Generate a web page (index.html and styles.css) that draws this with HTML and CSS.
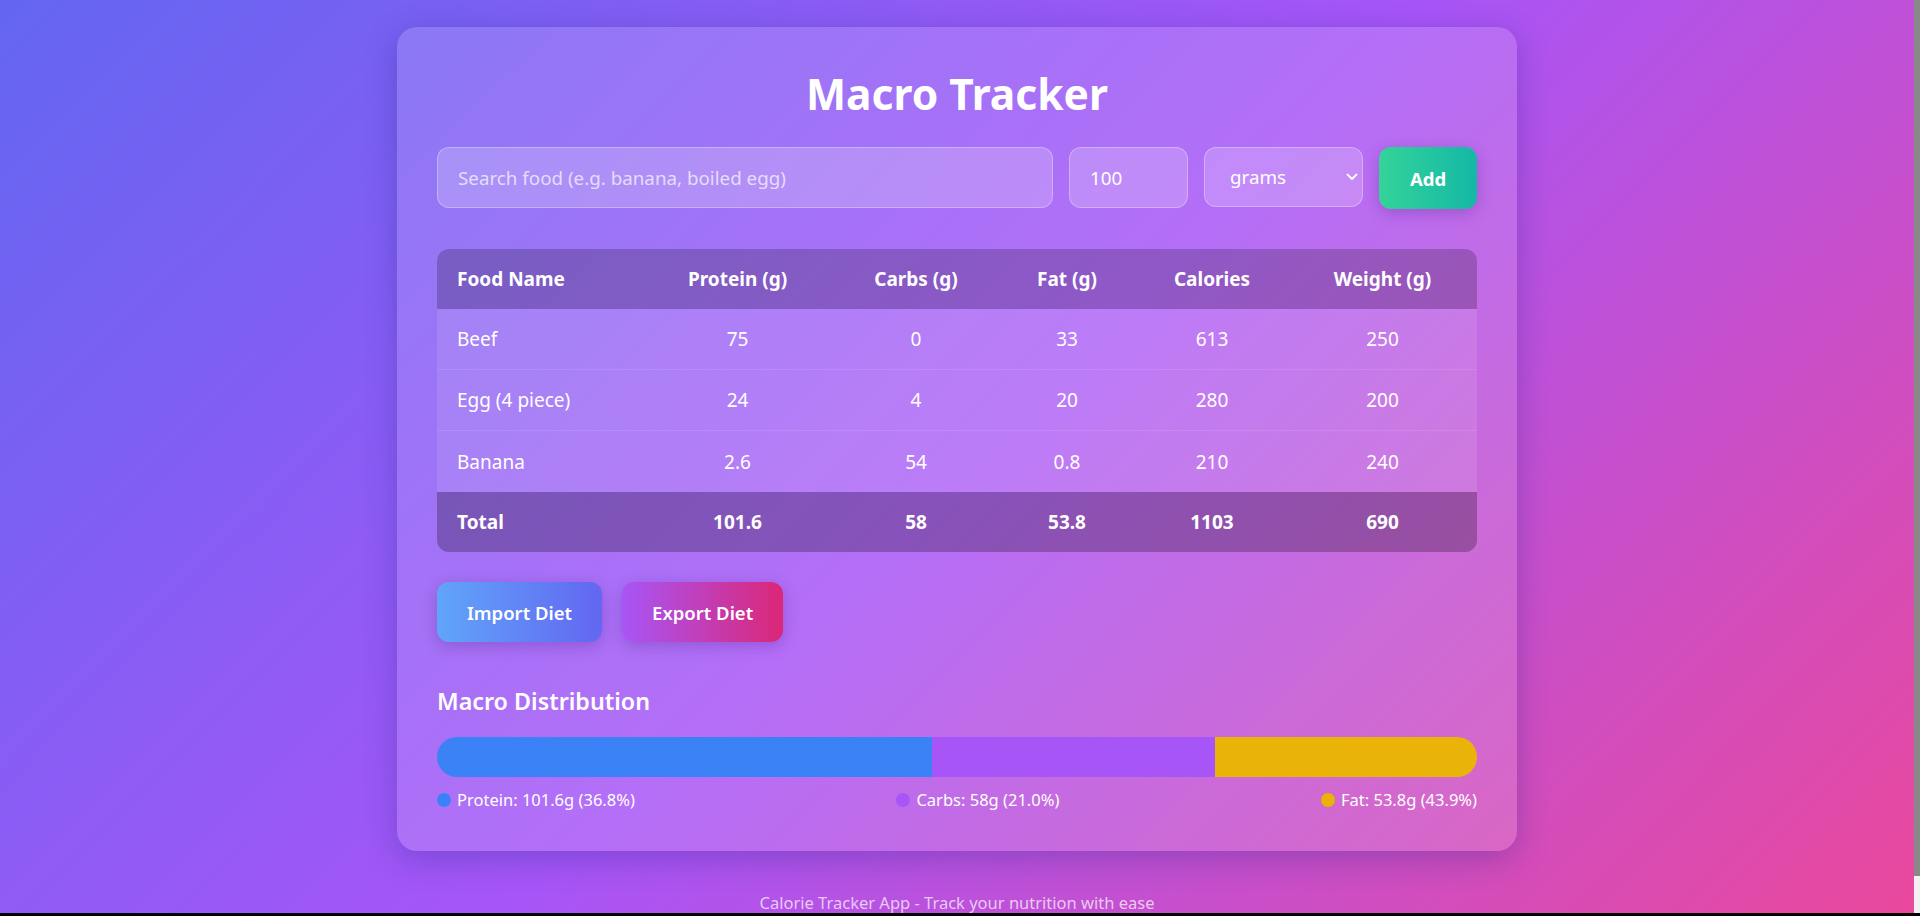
FILE: index.html
```html
<!DOCTYPE html>
<html lang="en">
<head>
<meta charset="utf-8">
<title>Macro Tracker</title>
<link rel="stylesheet" href="styles.css">
</head>
<body>
<main class="page">
  <section class="card">
    <h1 class="title">Macro Tracker</h1>
    <form class="add-row">
      <input class="field field-search" type="text" placeholder="Search food (e.g. banana, boiled egg)">
      <input class="field field-qty" type="text" value="100">
      <div class="select-wrap">
        <select class="field field-unit">
          <option>grams</option>
          <option>pieces</option>
        </select>
        <svg class="chev" width="12" height="8" viewBox="0 0 12 8"><path d="M1.5 1.5 6 6l4.5-4.5" fill="none" stroke="#fff" stroke-width="1.8" stroke-linecap="round" stroke-linejoin="round"/></svg>
      </div>
      <button class="btn btn-add" type="button">Add</button>
    </form>

    <div class="table-wrap">
      <table class="macro-table">
        <colgroup>
          <col class="c-name"><col class="c-protein"><col class="c-carbs"><col class="c-fat"><col class="c-cal"><col class="c-weight">
        </colgroup>
        <thead>
          <tr><th class="name">Food Name</th><th>Protein (g)</th><th>Carbs (g)</th><th>Fat (g)</th><th>Calories</th><th>Weight (g)</th></tr>
        </thead>
        <tbody>
          <tr><td class="name">Beef</td><td>75</td><td>0</td><td>33</td><td>613</td><td>250</td></tr>
          <tr><td class="name">Egg (4 piece)</td><td>24</td><td>4</td><td>20</td><td>280</td><td>200</td></tr>
          <tr><td class="name">Banana</td><td>2.6</td><td>54</td><td>0.8</td><td>210</td><td>240</td></tr>
        </tbody>
        <tfoot>
          <tr><td class="name">Total</td><td>101.6</td><td>58</td><td>53.8</td><td>1103</td><td>690</td></tr>
        </tfoot>
      </table>
    </div>

    <div class="actions">
      <button class="btn btn-import" type="button">Import Diet</button>
      <button class="btn btn-export" type="button">Export Diet</button>
    </div>

    <section class="dist">
      <h2 class="dist-title">Macro Distribution</h2>
      <div class="bar">
        <div class="seg seg-protein" style="width:47.61%"></div>
        <div class="seg seg-carbs" style="width:27.18%"></div>
        <div class="seg seg-fat" style="width:25.21%"></div>
      </div>
      <div class="legend">
        <span class="legend-item"><span class="dot dot-protein"></span>Protein: 101.6g (36.8%)</span>
        <span class="legend-item"><span class="dot dot-carbs"></span>Carbs: 58g (21.0%)</span>
        <span class="legend-item"><span class="dot dot-fat"></span>Fat: 53.8g (43.9%)</span>
      </div>
    </section>
  </section>
  <footer class="footer">Calorie Tracker App - Track your nutrition with ease</footer>
</main>
<div class="scrollbar"><div class="scrollbar-thumb"></div></div>
<div class="screen-edge"></div>
</body>
</html>
```

FILE: styles.css
```css
* { box-sizing: border-box; }

body {
  margin: 0;
  font-family: "Segoe UI", "Noto Sans", sans-serif;
  color: #fff;
  background: linear-gradient(135deg, #6366f1 0%, #a855f7 50%, #ec4899 100%);
  min-height: 100vh;
}

.page {
  margin-right: 6px;
  padding: 27px 0 44px;
}

.card {
  width: 1120px;
  margin: 0 auto;
  padding: 40px;
  border-radius: 20px;
  background: rgba(255, 255, 255, 0.15);
  box-shadow: 0 8px 32px rgba(31, 38, 135, 0.3);
}

.title {
  margin: 0 0 26px;
  font-size: 42.5px;
  line-height: 54px;
  font-weight: 700;
  text-align: center;
}

.add-row {
  display: flex;
  gap: 16px;
  margin: 0;
}

.field {
  height: 61px;
  padding: 0 20px;
  font-family: inherit;
  font-size: 18.8px;
  color: #fff;
  background: rgba(255, 255, 255, 0.2);
  border: 1px solid rgba(255, 255, 255, 0.3);
  border-radius: 12px;
  outline: none;
}
.field::placeholder { color: rgba(255, 255, 255, 0.7); }

.field-search { flex: 1; min-width: 0; }
.field-qty { width: 119px; }

.select-wrap {
  position: relative;
  width: 159px;
}
.field-unit {
  width: 100%;
  height: 60px;
  padding-left: 25px;
  appearance: none;
  -webkit-appearance: none;
}
.field-unit option { color: #333; }
.chev {
  position: absolute;
  right: 5px;
  top: 26px;
  pointer-events: none;
}

.btn {
  font-family: inherit;
  font-size: 18.5px;
  font-weight: 600;
  color: #fff;
  border: none;
  border-radius: 12px;
  cursor: pointer;
  box-shadow: 0 4px 15px rgba(60, 20, 120, 0.25);
}
.btn-add {
  width: 98px;
  height: 62px;
  font-weight: 700;
  background: linear-gradient(90deg, #34d399, #14b8a6);
}

.table-wrap {
  margin-top: 40px;
  border-radius: 12px;
  overflow: hidden;
}
.macro-table {
  width: 100%;
  border-collapse: separate;
  border-spacing: 0;
  table-layout: fixed;
  font-size: 19px;
}
.c-name { width: 204px; }
.c-protein { width: 193px; }
.c-carbs { width: 164px; }
.c-fat { width: 138px; }
.c-cal { width: 152px; }
.c-weight { width: 189px; }

.macro-table th,
.macro-table td {
  height: 60px;
  padding: 0 20px;
  text-align: center;
  vertical-align: middle;
  white-space: nowrap;
}
.macro-table .name { text-align: left; }
.macro-table thead tr { background: rgba(0, 0, 0, 0.2); }
.macro-table th { font-weight: 700; }
.macro-table tbody tr { background: rgba(255, 255, 255, 0.1); }
.macro-table tbody td {
  height: 61px;
  border-bottom: 1px solid rgba(255, 255, 255, 0.1);
}
.macro-table tbody tr:last-child td {
  height: 61px;
  border-bottom: none;
}
.macro-table tfoot tr {
  background: rgba(0, 0, 0, 0.25);
  font-weight: 700;
}

.actions {
  display: flex;
  gap: 20px;
  margin-top: 30px;
}
.actions .btn {
  height: 60px;
  padding: 0 30px;
}
.btn-import { background: linear-gradient(90deg, #60a5fa, #6366f1); }
.btn-export { background: linear-gradient(90deg, #a855f7, #db2777); }

.dist { margin-top: 40px; }
.dist-title {
  margin: 0 0 17px;
  font-size: 23.3px;
  line-height: 38px;
  font-weight: 600;
}
.bar {
  display: flex;
  height: 40px;
  border-radius: 20px;
  overflow: hidden;
}
.seg { height: 100%; }
.seg-protein { background: #3b82f6; }
.seg-carbs { background: #a855f7; }
.seg-fat { background: #eab308; }

.legend {
  display: flex;
  justify-content: space-between;
  margin-top: 12px;
  font-size: 16.5px;
  line-height: 22px;
}
.legend-item {
  display: flex;
  align-items: center;
  gap: 6px;
}
.dot {
  width: 14px;
  height: 14px;
  border-radius: 50%;
}
.dot-protein { background: #3b82f6; }
.dot-carbs { background: #a855f7; }
.dot-fat { background: #eab308; }

.footer {
  margin-top: 40px;
  text-align: center;
  font-size: 16.5px;
  line-height: 24px;
  color: rgba(255, 255, 255, 0.7);
}

.scrollbar {
  position: fixed;
  top: 0;
  right: 0;
  bottom: 0;
  width: 6px;
  background: #f1f1f1;
  z-index: 9;
}
.scrollbar-thumb {
  height: 876px;
  background: #888;
}

.screen-edge {
  position: fixed;
  left: 0;
  right: 0;
  bottom: 0;
  height: 3px;
  background: #000;
  z-index: 10;
}
```
